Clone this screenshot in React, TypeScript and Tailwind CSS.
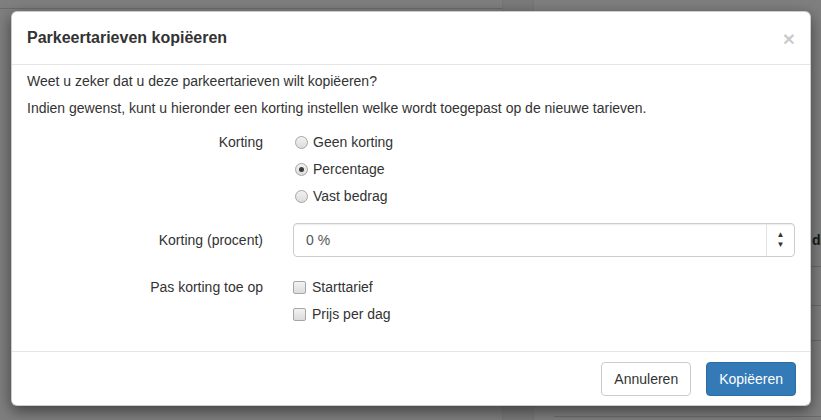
import React from 'react'

const font = { fontFamily: '"Liberation Sans", Arial, sans-serif' }

function Radio({ checked, label }: { checked?: boolean; label: string }) {
  return (
    <div className="flex h-5 items-center">
      <span className="ml-[2px] mr-[5px] flex h-[13px] w-[13px] items-center justify-center rounded-full border border-[#a6a6a6] bg-gradient-to-b from-[#f2f2f2] to-[#dcdcdc]">
        {checked && <span className="h-[5px] w-[5px] rounded-full bg-[#3b3b3b]" />}
      </span>
      <span>{label}</span>
    </div>
  )
}

function Check({ label }: { label: string }) {
  return (
    <div className="flex h-5 items-center">
      <span className="mr-[6px] h-[13px] w-[13px] rounded-[2px] border border-[#a6a6a6] bg-gradient-to-b from-[#f2f2f2] to-[#dcdcdc]" />
      <span>{label}</span>
    </div>
  )
}

function FormRow({ label, children, className }: { label: string; children: React.ReactNode; className?: string }) {
  return (
    <div className={'-mx-[15px] flex ' + (className ?? '')}>
      <div className="w-[266px] px-[15px] pt-[7px] text-right leading-5">{label}</div>
      <div className="flex-1 px-[15px]">{children}</div>
    </div>
  )
}

export default function App() {
  return (
    <div className="relative h-[420px] w-[821px] overflow-hidden bg-[#7f7f7f]" style={font}>
      {/* page behind the backdrop */}
      <div className="flex h-full">
        <div className="w-[502px]">
          <div className="h-[9px] border-b border-[#6c6c6c]" />
        </div>
        <div className="w-[32px] border-x border-[#767676] bg-[#7a7a7a]" />
        <div className="flex flex-1 flex-col pl-[20px] pt-[230px]">
          <div className="flex h-[20px] justify-end text-[14px] font-bold leading-5 text-[#1a1a1a]">
            <span className="w-[9px] overflow-hidden">da</span>
          </div>
          <div className="mt-[16px] h-[1px] bg-[#6c6c6c]" />
          <div className="mt-[38px] h-[1px] bg-[#6c6c6c]" />
          <div className="mt-[34px] h-[1px] bg-[#6c6c6c]" />
          <div className="mt-[75px] h-[1px] bg-[#6c6c6c]" />
        </div>
      </div>

      {/* modal */}
      <div className="absolute left-[11px] top-[11px] w-[800px] rounded-[6px] border border-black/20 bg-white text-[14px] text-[#333] shadow-[0_5px_15px_rgba(0,0,0,0.5)]">
        <div className="flex h-[53px] items-center justify-between border-b border-[#e5e5e5] px-[15px]">
          <h4 className="text-[16px] font-bold leading-[22px] text-[#333]">Parkeertarieven kopiëeren</h4>
          <button className="text-[21px] font-bold leading-none text-black opacity-20">×</button>
        </div>

        <div className="flex h-[287px] flex-col border-b border-[#e5e5e5] px-[15px] pt-[6px]">
          <p className="leading-5">Weet u zeker dat u deze parkeertarieven wilt kopiëeren?</p>
          <p className="mt-[7px] leading-5">
            Indien gewenst, kunt u hieronder een korting instellen welke wordt toegepast op de nieuwe tarieven.
          </p>

          <FormRow label="Korting" className="mt-[7px]">
            <div className="flex flex-col gap-[7px] pt-[7px] leading-5">
              <Radio label="Geen korting" />
              <Radio label="Percentage" checked />
              <Radio label="Vast bedrag" />
            </div>
          </FormRow>

          <FormRow label="Korting (procent)" className="mt-[17px]">
            <div className="flex h-[34px] items-center rounded-[4px] border border-[#ccc] shadow-[inset_0_1px_1px_rgba(0,0,0,0.075)]">
              <span className="flex-1 px-[12px] text-[#555]">0 %</span>
              <div className="flex h-full w-[28px] flex-col items-center justify-center border-l border-[#e3e3e3] text-[8px] leading-[10px] text-[#333]">
                <span>▲</span>
                <span>▼</span>
              </div>
            </div>
          </FormRow>

          <FormRow label="Pas korting toe op" className="mt-[13px]">
            <div className="flex flex-col gap-[7px] pt-[7px] leading-5">
              <Check label="Starttarief" />
              <Check label="Prijs per dag" />
            </div>
          </FormRow>
        </div>

        <div className="flex justify-end gap-[15px] px-[14px] pb-[9px] pt-[10px]">
          <button className="h-[34px] rounded-[4px] border border-[#ccc] bg-white px-[12px] text-[14px] text-[#333]">
            Annuleren
          </button>
          <button className="h-[34px] rounded-[4px] border border-[#2e6da4] bg-[#337ab7] px-[12px] text-[14px] text-white">
            Kopiëeren
          </button>
        </div>
      </div>
    </div>
  )
}
